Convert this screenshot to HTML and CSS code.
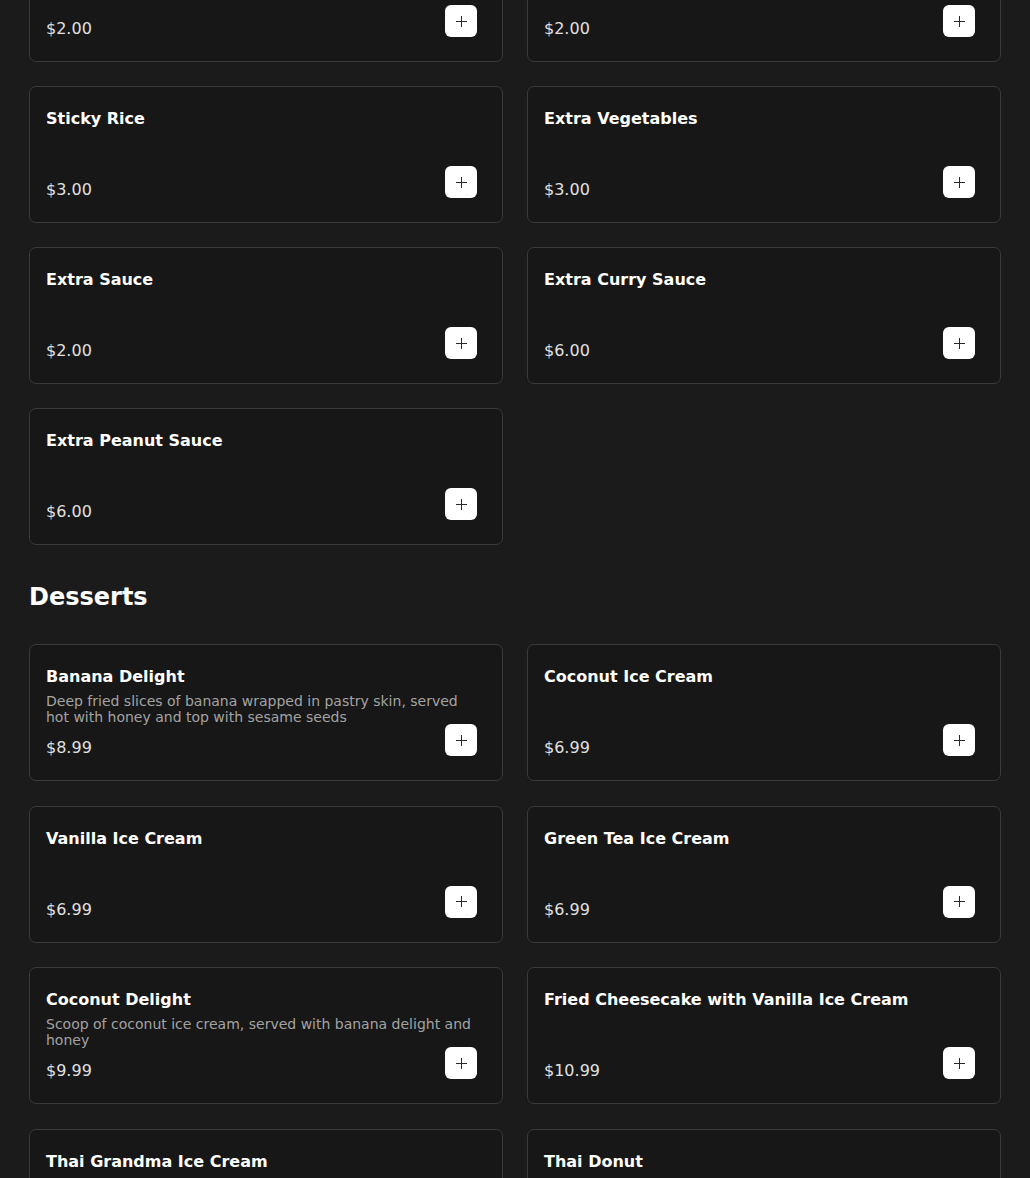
FILE: index.html
```html
<!DOCTYPE html>
<html lang="en">
<head>
<meta charset="utf-8">
<title>Menu</title>
<link rel="stylesheet" href="styles.css">
</head>
<body>
<main class="menu">
  <section class="section section-first">
    <div class="grid">
      <article class="card">
        <h3 class="card-title">Steamed Rice</h3>
        <p class="card-desc"></p>
        <p class="card-price">$2.00</p>
        <button class="add" aria-label="Add"><svg viewBox="0 0 11 11" width="11" height="11"><path d="M5.5 0v11M0 5.5h11"/></svg></button>
      </article>
      <article class="card">
        <h3 class="card-title">Brown Rice</h3>
        <p class="card-desc"></p>
        <p class="card-price">$2.00</p>
        <button class="add" aria-label="Add"><svg viewBox="0 0 11 11" width="11" height="11"><path d="M5.5 0v11M0 5.5h11"/></svg></button>
      </article>
      <article class="card">
        <h3 class="card-title">Sticky Rice</h3>
        <p class="card-desc"></p>
        <p class="card-price">$3.00</p>
        <button class="add" aria-label="Add"><svg viewBox="0 0 11 11" width="11" height="11"><path d="M5.5 0v11M0 5.5h11"/></svg></button>
      </article>
      <article class="card">
        <h3 class="card-title">Extra Vegetables</h3>
        <p class="card-desc"></p>
        <p class="card-price">$3.00</p>
        <button class="add" aria-label="Add"><svg viewBox="0 0 11 11" width="11" height="11"><path d="M5.5 0v11M0 5.5h11"/></svg></button>
      </article>
      <article class="card">
        <h3 class="card-title">Extra Sauce</h3>
        <p class="card-desc"></p>
        <p class="card-price">$2.00</p>
        <button class="add" aria-label="Add"><svg viewBox="0 0 11 11" width="11" height="11"><path d="M5.5 0v11M0 5.5h11"/></svg></button>
      </article>
      <article class="card">
        <h3 class="card-title">Extra Curry Sauce</h3>
        <p class="card-desc"></p>
        <p class="card-price">$6.00</p>
        <button class="add" aria-label="Add"><svg viewBox="0 0 11 11" width="11" height="11"><path d="M5.5 0v11M0 5.5h11"/></svg></button>
      </article>
      <article class="card">
        <h3 class="card-title">Extra Peanut Sauce</h3>
        <p class="card-desc"></p>
        <p class="card-price">$6.00</p>
        <button class="add" aria-label="Add"><svg viewBox="0 0 11 11" width="11" height="11"><path d="M5.5 0v11M0 5.5h11"/></svg></button>
      </article>
    </div>
  </section>

  <section class="section">
    <h2 class="section-title">Desserts</h2>
    <div class="grid grid-desserts">
      <article class="card">
        <h3 class="card-title">Banana Delight</h3>
        <p class="card-desc">Deep fried slices of banana wrapped in pastry skin, served hot with honey and top with sesame seeds</p>
        <p class="card-price">$8.99</p>
        <button class="add" aria-label="Add"><svg viewBox="0 0 11 11" width="11" height="11"><path d="M5.5 0v11M0 5.5h11"/></svg></button>
      </article>
      <article class="card">
        <h3 class="card-title">Coconut Ice Cream</h3>
        <p class="card-desc"></p>
        <p class="card-price">$6.99</p>
        <button class="add" aria-label="Add"><svg viewBox="0 0 11 11" width="11" height="11"><path d="M5.5 0v11M0 5.5h11"/></svg></button>
      </article>
      <article class="card">
        <h3 class="card-title">Vanilla Ice Cream</h3>
        <p class="card-desc"></p>
        <p class="card-price">$6.99</p>
        <button class="add" aria-label="Add"><svg viewBox="0 0 11 11" width="11" height="11"><path d="M5.5 0v11M0 5.5h11"/></svg></button>
      </article>
      <article class="card">
        <h3 class="card-title">Green Tea Ice Cream</h3>
        <p class="card-desc"></p>
        <p class="card-price">$6.99</p>
        <button class="add" aria-label="Add"><svg viewBox="0 0 11 11" width="11" height="11"><path d="M5.5 0v11M0 5.5h11"/></svg></button>
      </article>
      <article class="card">
        <h3 class="card-title">Coconut Delight</h3>
        <p class="card-desc">Scoop of coconut ice cream, served with banana delight and honey</p>
        <p class="card-price">$9.99</p>
        <button class="add" aria-label="Add"><svg viewBox="0 0 11 11" width="11" height="11"><path d="M5.5 0v11M0 5.5h11"/></svg></button>
      </article>
      <article class="card">
        <h3 class="card-title">Fried Cheesecake with Vanilla Ice Cream</h3>
        <p class="card-desc"></p>
        <p class="card-price">$10.99</p>
        <button class="add" aria-label="Add"><svg viewBox="0 0 11 11" width="11" height="11"><path d="M5.5 0v11M0 5.5h11"/></svg></button>
      </article>
      <article class="card">
        <h3 class="card-title">Thai Grandma Ice Cream</h3>
        <p class="card-desc"></p>
        <p class="card-price">$6.99</p>
        <button class="add" aria-label="Add"><svg viewBox="0 0 11 11" width="11" height="11"><path d="M5.5 0v11M0 5.5h11"/></svg></button>
      </article>
      <article class="card">
        <h3 class="card-title">Thai Donut</h3>
        <p class="card-desc"></p>
        <p class="card-price">$6.99</p>
        <button class="add" aria-label="Add"><svg viewBox="0 0 11 11" width="11" height="11"><path d="M5.5 0v11M0 5.5h11"/></svg></button>
      </article>
    </div>
  </section>
</main>
</body>
</html>
```

FILE: styles.css
```css
* { box-sizing: border-box; }

html, body {
  margin: 0;
  padding: 0;
  background: #1b1b1b;
  color: #ffffff;
  font-family: "DejaVu Sans", "Liberation Sans", sans-serif;
}

.menu {
  padding: 0 29px 40px;
  margin-top: -75px;
}

.section-title {
  margin: 34px 0 29px;
  font-size: 24px;
  line-height: 36px;
  font-weight: 700;
  color: #ffffff;
}

.grid {
  display: grid;
  grid-template-columns: 1fr 1fr;
  gap: 24px;
}

.grid-desserts {
  row-gap: 24.6px;
}

.card {
  display: grid;
  grid-template-columns: 1fr;
  grid-template-rows: auto auto auto;
  background: #171717;
  border: 1px solid #3a3a3a;
  border-radius: 7px;
  padding: 20px 25px 20px 16px;
  height: 137px;
}

.card-title {
  grid-row: 1;
  grid-column: 1;
  margin: 0;
  font-size: 16px;
  line-height: 24px;
  font-weight: 700;
  color: #ffffff;
}

.card-desc {
  grid-row: 2;
  grid-column: 1;
  margin: 4px 0 0;
  min-height: 32px;
  font-size: 14px;
  line-height: 16px;
  color: #a3a3a3;
}

.card-price {
  grid-row: 3;
  grid-column: 1;
  margin: 11px 0 0;
  font-size: 16px;
  line-height: 24px;
  color: #e0e0e0;
}

.add {
  grid-row: 2 / 4;
  grid-column: 1;
  justify-self: end;
  align-self: end;
  margin: 0 0 4px 0;
  width: 32px;
  height: 32px;
  padding: 0;
  border: none;
  border-radius: 6px;
  background: #ffffff;
  display: flex;
  align-items: center;
  justify-content: center;
  cursor: pointer;
}

.add svg {
  display: block;
  fill: none;
  stroke: #2a2a2a;
  stroke-width: 1;
}
```
